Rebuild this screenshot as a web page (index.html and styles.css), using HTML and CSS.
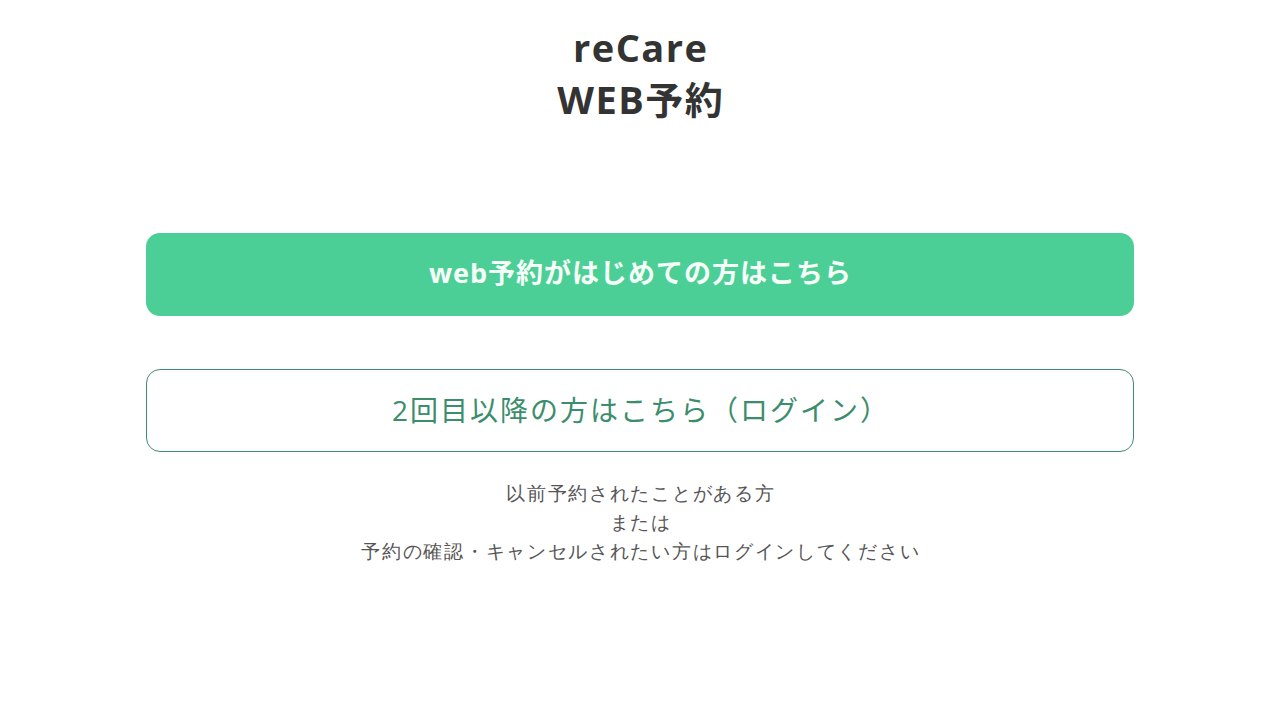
FILE: index.html
```html
<!DOCTYPE html>
<html lang="ja">
<head>
<meta charset="utf-8">
<title>reCare WEB予約</title>
<link rel="stylesheet" href="styles.css">
</head>
<body>
<header class="header">
  <h1 class="title">reCare<br>WEB予約</h1>
</header>
<main class="main">
  <a class="btn btn-primary" href="#">web予約がはじめての方はこちら</a>
  <a class="btn btn-outline" href="#">2回目以降の方はこちら（ログイン）</a>
  <p class="note">以前予約されたことがある方<br>または<br>予約の確認・キャンセルされたい方はログインしてください</p>
</main>
</body>
</html>
```
FILE: styles.css
```css
html, body {
  margin: 0;
  padding: 0;
  background: #ffffff;
}
body {
  font-family: "Open Sans", "Noto Sans CJK JP", sans-serif;
  color: #333333;
}
.header {
  padding-top: 21px;
  text-align: center;
}
.title {
  margin: 0;
  padding-left: 1.5px;
  font-size: 38px;
  line-height: 52px;
  font-weight: 700;
  letter-spacing: 1.5px;
  color: #333333;
}
.main {
  width: 988px;
  margin: 108px auto 0;
  display: flex;
  flex-direction: column;
  align-items: stretch;
}
.btn {
  box-sizing: border-box;
  height: 83px;
  border-radius: 14px;
  display: flex;
  align-items: center;
  justify-content: center;
  text-decoration: none;
}
.btn-primary {
  background: #4ccf96;
  color: #f7fff9;
  font-weight: 700;
  font-size: 27px;
  letter-spacing: 1px;
  padding: 0 0 6px 1px;
}
.btn-outline {
  margin-top: 53px;
  border: 1px solid #3f8b6d;
  color: #3b8d6c;
  background: #ffffff;
  font-size: 28px;
  letter-spacing: 2px;
  padding: 0 0 4px 2px;
}
.note {
  margin: 27px 0 0;
  padding-left: 1.7px;
  text-align: center;
  font-family: "Liberation Serif", serif;
  font-size: 19px;
  letter-spacing: 1.7px;
  line-height: 29px;
  color: #555555;
}
```
